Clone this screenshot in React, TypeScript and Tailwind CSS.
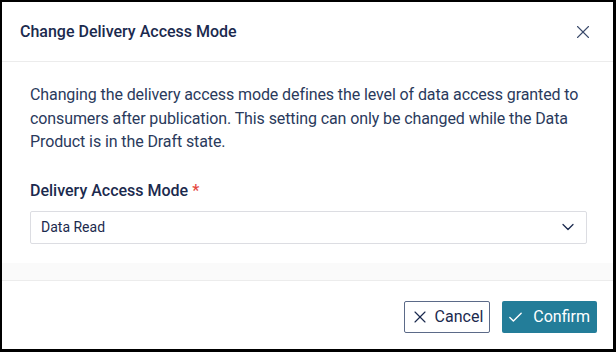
import { X, ChevronDown, Check } from "lucide-react";

function App() {
  return (
    <div className="w-[616px] h-[352px] bg-white border-l-2 border-t-2 border-r-[3px] border-b-[3px] border-black flex flex-col font-['Roboto',sans-serif] text-[#1b2a4e]">
      <div className="h-[60px] flex items-center justify-between pl-[18px] pr-[19px] border-b border-[#ececec] shrink-0">
        <span className="text-[16px] font-medium">Change Delivery Access Mode</span>
        <X className="w-[22px] h-[22px] text-[#3b4a6b]" strokeWidth={1.2} />
      </div>
      <div className="flex-1 flex flex-col">
        <div className="pl-[28px] pr-[26px] pt-[21px]">
          <p className="text-[16px] leading-[23.5px] text-[#2a3a5c] tracking-[-0.1px] -mr-[4px]">
            Changing the delivery access mode defines the level of data access granted to
            consumers after publication. This setting can only be changed while the Data
            Product is in the Draft state.
          </p>
          <div className="mt-[27px] text-[16px] leading-[20px] font-medium">
            Delivery Access Mode <span className="text-[#e5483f]">*</span>
          </div>
          <div className="mt-[10px] h-[33px] border border-[#dcdde2] rounded-[2px] flex items-center justify-between pl-[10px] pr-[8px]">
            <span className="text-[14px] text-[#1b2a4e]">Data Read</span>
            <ChevronDown className="w-[20px] h-[20px] text-[#1b2a4e]" strokeWidth={1.5} />
          </div>
        </div>
        <div className="flex-1" />
        <div className="h-[18px] bg-[#fafafa] border-b border-[#ececec]" />
      </div>
      <div className="h-[68px] flex items-start justify-end gap-[12px] pt-[20px] pr-[16px] shrink-0">
        <button className="h-[32px] pl-[5px] pr-[6px] border border-[#5b6a88] rounded-[2px] flex items-center gap-[5px] text-[16px] text-[#1b2a4e] bg-white">
          <X className="w-[20px] h-[20px]" strokeWidth={1.4} />
          Cancel
        </button>
        <button className="h-[32px] pl-[5px] pr-[7px] bg-[#237d99] rounded-[2px] flex items-center gap-[9px] text-[16px] text-white">
          <Check className="w-[17px] h-[17px]" strokeWidth={2} />
          Confirm
        </button>
      </div>
    </div>
  );
}

export default App;
